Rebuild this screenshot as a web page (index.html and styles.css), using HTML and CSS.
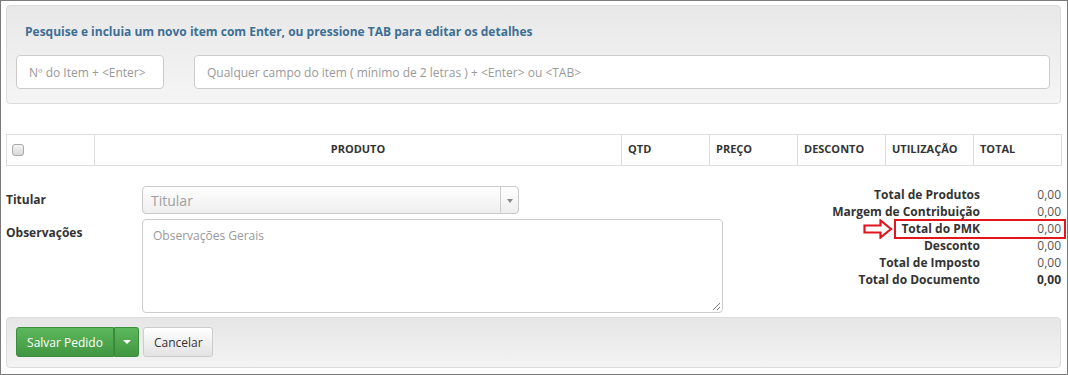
FILE: index.html
```html
<!DOCTYPE html>
<html lang="pt-BR">

<head>
    <meta charset="UTF-8">
    <title>Pedido</title>
    <link rel="stylesheet" href="styles.css">
</head>

<body>
    <div class="frame">
        <section class="search-well">
            <h4 class="search-title">Pesquise e incluia um novo item com Enter, ou pressione TAB para editar os detalhes</h4>
            <div class="search-inputs">
                <input class="field item-number" type="text" placeholder="Nº do Item + <Enter>">
                <input class="field item-search" type="text" placeholder="Qualquer campo do item ( mínimo de 2 letras ) + <Enter> ou <TAB>">
            </div>
        </section>

        <table class="items">
            <thead>
                <tr>
                    <th class="col-check"><span class="checkbox"></span></th>
                    <th class="col-product">PRODUTO</th>
                    <th>QTD</th>
                    <th>PREÇO</th>
                    <th>DESCONTO</th>
                    <th>UTILIZAÇÃO</th>
                    <th>TOTAL</th>
                </tr>
            </thead>
        </table>

        <div class="order-body">
            <div class="order-form">
                <label class="form-label">Titular</label>
                <div class="select">
                    <span class="select-text">Titular</span>
                    <span class="select-arrow"></span>
                </div>
                <label class="form-label">Observações</label>
                <div class="textarea">Observações Gerais<span class="grip"></span></div>
            </div>

            <div class="totals">
                <div class="total-row"><span class="total-label">Total de Produtos</span><span class="total-value">0,00</span></div>
                <div class="total-row"><span class="total-label">Margem de Contribuição</span><span class="total-value">0,00</span></div>
                <div class="total-row highlight">
                    <svg class="mark-arrow" width="30" height="20" viewBox="0 0 30 20">
                        <path d="M1.5 6.5 H17.5 V1.5 L28 10 L17.5 18.5 V13.5 H1.5 Z" fill="none" stroke="#e3151f" stroke-width="2.2" stroke-linejoin="miter"/>
                    </svg>
                    <span class="total-label">Total do PMK</span><span class="total-value">0,00</span>
                    <span class="mark-box"></span>
                </div>
                <div class="total-row"><span class="total-label">Desconto</span><span class="total-value">0,00</span></div>
                <div class="total-row"><span class="total-label">Total de Imposto</span><span class="total-value">0,00</span></div>
                <div class="total-row"><span class="total-label">Total do Documento</span><span class="total-value strong">0,00</span></div>
            </div>
        </div>

        <section class="actions-well">
            <div class="btn-group">
                <button class="btn btn-success">Salvar Pedido</button>
                <button class="btn btn-success btn-caret"><span class="caret"></span></button>
            </div>
            <button class="btn btn-default">Cancelar</button>
        </section>
    </div>
</body>

</html>
```

FILE: styles.css
```css
* {
    margin: 0;
    padding: 0;
    box-sizing: border-box;
}

body {
    background-color: #ffffff;
    font-family: "Open Sans", "Liberation Sans", sans-serif;
    font-size: 12px;
    color: #333333;
}

.frame {
    width: 1068px;
    height: 375px;
    border: 1px solid #7b7b7b;
    padding: 4px 6px 6px 5px;
    display: flex;
    flex-direction: column;
}

/* search area */
.search-well {
    height: 99px;
    border: 1px solid #dcdcdc;
    border-radius: 4px;
    background: linear-gradient(#e8e8e8, #f5f5f5);
    padding: 17px 10px 0 9px;
}

.search-title {
    font-size: 12px;
    font-weight: 700;
    line-height: 18px;
    color: #3d6f94;
    padding-left: 9px;
}

.search-inputs {
    display: flex;
    gap: 30px;
    margin-top: 14px;
}

.field {
    height: 34px;
    border: 1px solid #cccccc;
    border-radius: 4px;
    background-color: #ffffff;
    font-family: "Open Sans", "Liberation Sans", sans-serif;
    font-size: 12px;
    padding: 0 12px;
    outline: none;
}

.field::placeholder {
    color: #999999;
}

.item-number {
    width: 148px;
}

.item-search {
    flex: 1;
}

/* items table */
.items {
    margin-top: 30px;
    width: 1055px;
    border-collapse: collapse;
    table-layout: fixed;
}

.items th {
    height: 31px;
    border: 1px solid #dddddd;
    font-size: 11px;
    font-weight: 700;
    text-align: left;
    padding: 0 6px 3px;
    width: 88px;
    color: #333333;
}

.items th.col-product {
    width: 527px;
    text-align: center;
}

.items th.col-check {
    padding-left: 5px;
    padding-bottom: 1px;
}

.checkbox {
    display: block;
    width: 12px;
    height: 12px;
    border: 1px solid #a9a9a9;
    border-radius: 3px;
    background: linear-gradient(#f4f4f4, #d8d8d8);
}

/* form + totals */
.order-body {
    display: flex;
    height: 151px;
    padding-top: 20px;
}

.order-form {
    width: 717px;
    display: grid;
    grid-template-columns: 136px 1fr;
    grid-template-rows: 28px 94px;
    row-gap: 5px;
}

.form-label {
    font-weight: 700;
    font-size: 12px;
    line-height: 16px;
    padding-top: 6px;
}

.select {
    width: 377px;
    height: 28px;
    border: 1px solid #c9c9c9;
    border-radius: 4px;
    background: linear-gradient(#ffffff, #eeeeee);
    display: flex;
    align-items: center;
}

.select-text {
    flex: 1;
    font-size: 14px;
    color: #a0a0a0;
    padding-left: 8px;
}

.select-arrow {
    width: 18px;
    height: 26px;
    border-left: 1px solid #cccccc;
    position: relative;
}

.select-arrow::after {
    content: "";
    position: absolute;
    left: 6px;
    top: 12px;
    border-left: 3px solid transparent;
    border-right: 3px solid transparent;
    border-top: 4px solid #888888;
}

.textarea {
    position: relative;
    width: 581px;
    height: 94px;
    border: 1px solid #cccccc;
    border-radius: 4px;
    padding: 7px 10px;
    font-size: 12px;
    color: #999999;
}

.grip {
    position: absolute;
    right: 2px;
    bottom: 2px;
    width: 7px;
    height: 7px;
    background: linear-gradient(135deg, transparent 45%, #777777 45%, #777777 55%, transparent 55%, transparent 75%, #777777 75%, #777777 85%, transparent 85%);
}

.totals {
    flex: 1;
}

.total-row {
    position: relative;
    display: flex;
    justify-content: flex-end;
    line-height: 17px;
    height: 17px;
}

.total-label {
    font-weight: 700;
    font-size: 12px;
    color: #333333;
}

.total-value {
    width: 81px;
    text-align: right;
    font-size: 12px;
    color: #555555;
}

.total-value.strong {
    font-weight: 700;
    color: #333333;
}

.mark-box {
    position: absolute;
    left: 171px;
    right: -5px;
    top: -1px;
    bottom: -2px;
    border: 2px solid #e3151f;
}

.mark-arrow {
    position: absolute;
    left: 140px;
    top: -1px;
}

/* action bar */
.actions-well {
    margin-top: auto;
    height: 51px;
    border: 1px solid #dcdcdc;
    border-radius: 4px;
    background: linear-gradient(#e6e6e6, #f3f3f3);
    padding: 9px 9px;
    display: flex;
    align-items: flex-start;
    gap: 4px;
}

.btn-group {
    display: flex;
}

.btn {
    height: 30px;
    font-family: "Open Sans", "Liberation Sans", sans-serif;
    font-size: 12px;
    border-radius: 3px;
    padding: 0 10px;
    cursor: pointer;
}

.btn-success {
    color: #ffffff;
    border: 1px solid #3b8c3b;
    background: linear-gradient(#5cb85c, #419641);
}

.btn-group .btn-success:first-child {
    width: 98px;
    border-radius: 3px 0 0 3px;
}

.btn-caret {
    width: 25px;
    padding: 0;
    border-left: 1px solid #3a873a;
    border-radius: 0 3px 3px 0;
    display: flex;
    align-items: center;
    justify-content: center;
}

.caret {
    border-left: 4px solid transparent;
    border-right: 4px solid transparent;
    border-top: 4px solid #ffffff;
}

.btn-default {
    width: 70px;
    color: #333333;
    border: 1px solid #cccccc;
    background: linear-gradient(#ffffff, #e2e2e2);
}
```
